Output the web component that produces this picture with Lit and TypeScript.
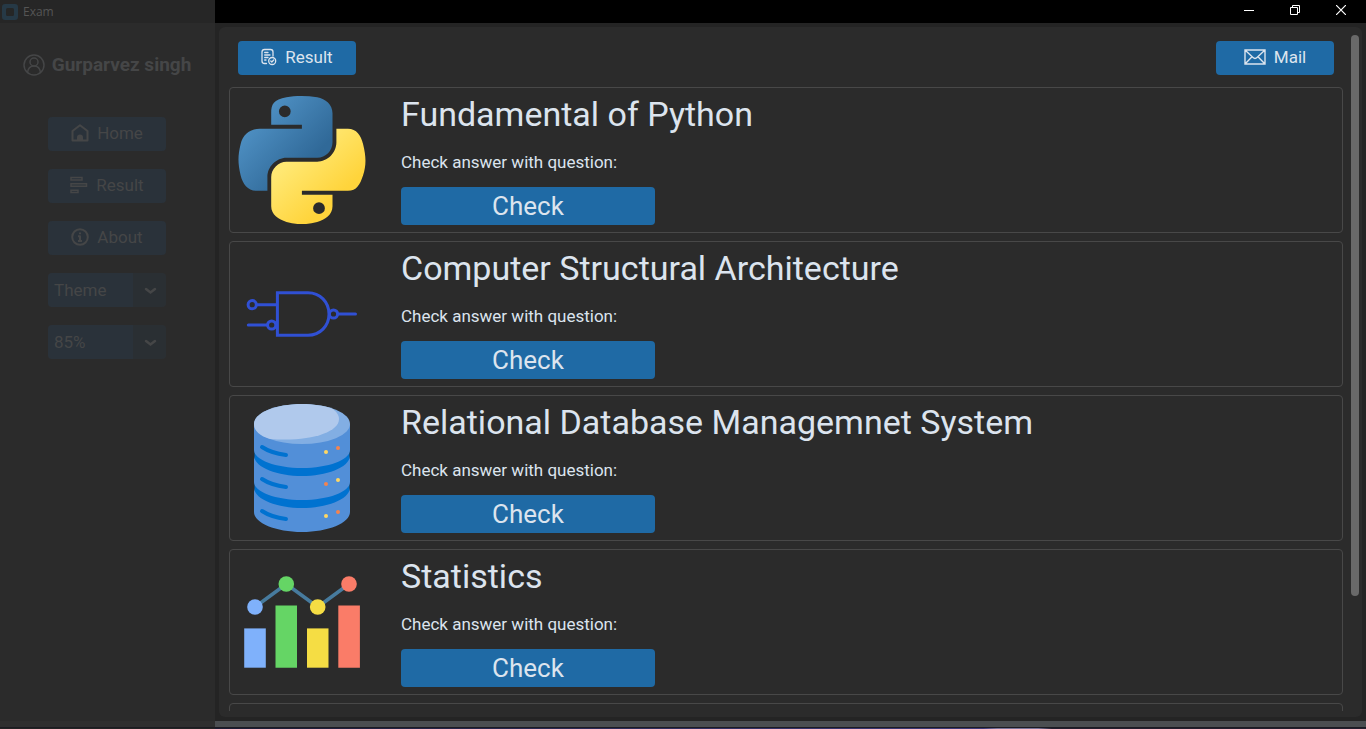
import { LitElement, html, css, svg } from "lit";
import { customElement } from "lit/decorators.js";

interface Subject {
  id: string;
  title: string;
  art: unknown;
}

const python = html`<svg viewBox="0 0 128 128" width="128" height="128" aria-hidden="true">
  <defs>
    <linearGradient id="pyBlue" x1="0" y1="0" x2="0.75" y2="0.7">
      <stop offset="0" stop-color="#5a9fd4" /><stop offset="1" stop-color="#306998" />
    </linearGradient>
    <linearGradient id="pyGold" x1="0.25" y1="0.3" x2="0.65" y2="0.75">
      <stop offset="0" stop-color="#ffe873" /><stop offset="1" stop-color="#ffd43b" />
    </linearGradient>
  </defs>
  <path fill="url(#pyBlue)" fill-rule="evenodd" d="M63.4 0C58 0 53 .5 48.500 1.300 35.500 3.600 33.200 8.400 33.200 17.200V28.800H63.900V32.700H21.700C12.800 32.700 5 38 2.600 48.200-.2 59.800-.3 67 2.600 79.200 4.800 88.300 10 94.800 18.900 94.800H29.400V80.800C29.400 70.700 38.200 61.700 48.500 61.700H79.200C87.700 61.700 94.500 54.700 94.500 46.200V17.200C94.500 8.900 87.500 2.700 79.200 1.300 74 .4 68.700 0 63.400 0ZM46.800 9.400a5.900 5.900 0 1 1 0 11.800a5.900 5.900 0 1 1 0-11.800Z" />
  <path fill="url(#pyGold)" fill-rule="evenodd" d="M98.400 32.700V46.300C98.400 56.800 89.500 65.700 79.200 65.700H48.500C40.200 65.700 33.200 72.900 33.200 81.200V110.300C33.200 118.600 40.400 123.500 48.500 125.900 58.300 128.700 67.600 129.200 79.200 125.900 86.900 123.600 94.500 119.100 94.500 110.300V98.700H63.900V94.800H109.800C118.700 94.800 122 88.600 125.100 79.200 128.300 69.600 128.200 60.300 125.100 48.200 122.900 39.300 118.700 32.700 109.800 32.700ZM81 106.300a5.900 5.900 0 1 1 0 11.800a5.900 5.900 0 1 1 0-11.800Z" />
</svg>`;

const gate = html`<svg viewBox="0 0 128 128" width="128" height="128" aria-hidden="true">
  <g fill="none" stroke="#3050d4" stroke-width="3" stroke-linecap="round">
    <path stroke-linecap="butt" d="M39.400 42.700H70C82 42.700 91 52 91 64S82 85.200 70 85.200H39.400Z" />
    <circle cx="14.200" cy="54.700" r="4.100" /><path d="M19 54.700H38" />
    <circle cx="33.700" cy="75" r="4.100" /><path d="M10.300 75H29" />
    <circle cx="95.500" cy="64" r="4.100" /><path d="M100.500 64H117.500" />
  </g>
</svg>`;

const database = html`<svg viewBox="0 0 128 128" width="128" height="128" aria-hidden="true">
  <path fill="#0072d0" d="M16.500 20H111.500V108H16.500Z" />
  <g fill="#528fd8">
    <path d="M16 20H112V46C112 56 90 64 64 64S16 56 16 46Z" />
    <path d="M16 52C17 64 40 72 64 72S111 64 112 52V78C112 88 90 96 64 96S16 88 16 78Z" />
    <path d="M16 84C17 96 40 104 64 104S111 96 112 84V108C112 119 90 128 64 128S16 119 16 108Z" />
  </g>
  <ellipse cx="64" cy="20" rx="48" ry="20" fill="#82aee3" />
  <path fill="#b0c9ec" d="M64 0C37 0 16 9 16 20C16 27 22 32 32 35C70 38 101 29 101 15C101 11 98 7 94 4.500C86 1.500 75 0 64 0Z" />
  <g fill="none" stroke="#0072d0" stroke-width="4" stroke-linecap="round">
    <path d="M24 43Q33 49 48 51" /><path d="M24 75Q33 81 48 83" /><path d="M24 107Q33 113 48 115" />
  </g>
  <g fill="#ffd764"><circle cx="88" cy="48" r="2" /><circle cx="100" cy="76" r="2" /><circle cx="88" cy="112" r="2" /></g>
  <g fill="#f5834e"><circle cx="100" cy="44" r="2" /><circle cx="88" cy="80" r="2" /><circle cx="100" cy="108" r="2" /></g>
</svg>`;

const chart = html`<svg viewBox="0 0 128 128" width="128" height="128" aria-hidden="true">
  <path d="M17 49L48.300 26L79.700 49L111 26" fill="none" stroke="#477b9e" stroke-width="3.600" />
  <path fill="#7fb1fb" d="M6.200 70.400H27.800V109.700H6.200Z" /><path fill="#65d565" d="M37.500 47.500H59V109.700H37.500Z" />
  <path fill="#f5dd44" d="M69 70.400H90.500V109.700H69Z" /><path fill="#fa7c68" d="M100.300 47.500H121.900V109.700H100.300Z" />
  <circle cx="17" cy="49" r="7.800" fill="#7fb1fb" /><circle cx="48.300" cy="26" r="7.800" fill="#65d565" />
  <circle cx="79.700" cy="49" r="7.800" fill="#f5dd44" /><circle cx="111" cy="26" r="7.800" fill="#fa7c68" />
</svg>`;

const stroked = (size: number, body: unknown, width = 1.5) => html`<svg width=${size} height=${size}
  viewBox="0 0 ${size} ${size}" fill="none" stroke="currentColor" stroke-width=${width}
  stroke-linejoin="round" stroke-linecap="round" aria-hidden="true">${body}</svg>`;

const icons = {
  user: stroked(22, svg`<circle cx="11" cy="11" r="10" /><circle cx="11" cy="8" r="4" /><path d="M4.500 18.500C5 14.500 7.500 12 11 12S17 14.500 17.500 18.500" />`),
  home: stroked(18, svg`<path stroke-width="2" d="M1.500 7L9 1.200L16.500 7V16.500H1.500Z" /><path fill="currentColor" stroke="none" d="M6 17V13.500A3 3 0 0 1 12 13.500V17Z" />`),
  bars: stroked(18, svg`<path stroke-linejoin="miter" d="M1 1.500H12V4H1ZM1 7.800H16.500V10.200H1ZM1 14.200H8V16.500H1Z" />`),
  info: stroked(18, svg`<circle cx="9" cy="9" r="7.800" stroke-width="2" /><path stroke-linecap="butt" stroke-width="2" d="M9 4.500V6.300M7 8.200H9V12.700M7 13H11" />`),
  report: html`<svg width="16" height="18" viewBox="1.500 0 16 18" fill="none" stroke="currentColor" stroke-width="1.300" stroke-linejoin="round" stroke-linecap="round" aria-hidden="true"><path d="M7 15.500H5C3.300 15.500 2.500 14.500 2.500 13V4C2.500 2.200 3.500 1.500 5 1.500H11C12.700 1.500 13.500 2.500 13.500 4V8M5.200 4.500H8.500M5.200 7H10.500M5.200 9.500H8.500M5.200 12H6.500" /><circle cx="12.700" cy="13" r="3.500" /><path d="M11.300 13L12.300 14L14.200 12" /></svg>`,
  mail: html`<svg width="22" height="16" viewBox="0 0 22 16" fill="none" stroke="currentColor" stroke-width="1.400" aria-hidden="true"><path d="M1 1H21V15H1ZM1 1L9 8.500Q11 10.300 13 8.500L21 1M1 15L8 7.800M21 15L14 7.800" /></svg>`,
};

const subjects: Subject[] = [
  { id: "python", title: "Fundamental of Python", art: python },
  { id: "csa", title: "Computer Structural Architecture", art: gate },
  { id: "rdbms", title: "Relational Database Managemnet System", art: database },
  { id: "stats", title: "Statistics", art: chart },
];

@customElement("app-root")
export class AppRoot extends LitElement {
  static styles = css`
    :host {
      display: flex;
      flex-direction: column;
      height: 100vh;
      overflow: hidden;
      background: #242424;
      color: #dce4ee;
      font: 17px/20px Roboto, "Liberation Sans", sans-serif;
    }
    * { box-sizing: border-box; }
    svg { display: block; flex: none; }
    button, select {
      font: inherit;
      color: inherit;
      border: 0;
      margin: 0;
      padding: 0;
    }
    h1, h2, p { margin: 0; font-weight: 400; }
    .titlebar {
      display: flex;
      flex: none;
      height: 23px;
      justify-content: space-between;
      background: #000;
      color: #fff;
    }
    .app {
      display: flex;
      align-items: center;
      gap: 5px;
      width: 215px;
      padding-left: 2px;
      background: #262626;
      color: #555;
      font: 12px/16px "Open Sans", sans-serif;
    }
    .controls { display: flex; padding-right: 2px; }
    .control {
      display: grid;
      place-items: center;
      width: 46px;
      height: 20px;
      background: none;
    }
    .body { display: flex; flex: 1; min-height: 0; }
    .sidebar {
      display: flex;
      flex-direction: column;
      align-items: center;
      width: 215px;
      padding-right: 1px;
      flex: none;
      background: #2b2b2b;
      color: #454647;
    }
    .user {
      display: flex;
      align-items: center;
      gap: 7px;
      height: 50px;
      margin: 17px 0 27px;
      font-size: 19px;
      font-weight: 700;
    }
    .user h1 { font: inherit; }
    .menu {
      display: flex;
      flex-direction: column;
      gap: 18px;
    }
    .item, .action {
      display: flex;
      align-items: center;
      justify-content: center;
      gap: 8px;
      width: 118px;
      height: 34px;
      padding-bottom: 2px;
      border-radius: 4px;
    }
    .item { background: #2a323a; }
    .picker { position: relative; display: block; width: 118px; height: 34px; }
    .select {
      appearance: none;
      width: 100%;
      height: 100%;
      padding: 0 6px;
      border-radius: 4px;
      background: linear-gradient(90deg, #2a323a 85px, #2a2f33 85px);
    }
    .chevron { position: absolute; right: 9px; top: 14px; pointer-events: none; }
    .main {
      display: flex;
      flex: 1;
      min-width: 0;
      margin: 4px;
      border-radius: 6px;
      padding: 8px 3px 6px 10px;
      background: #2b2b2b;
      gap: 8px;
    }
    .scroll { flex: 1; min-width: 0; overflow: hidden; }
    .toolbar {
      display: flex;
      justify-content: space-between;
      padding: 6px 9px 12px;
    }
    .action { background: #1f6aa5; }
    .cards { display: flex; flex-direction: column; gap: 8px; }
    .card {
      display: flex;
      gap: 35px;
      height: 146px;
      padding: 8px;
      border: 1px solid #484848;
      border-radius: 4px;
    }
    .info { display: flex; flex-direction: column; align-items: flex-start; }
    .title { font-size: 34px; line-height: 36px; }
    .hint { margin: 20px 0 15px; }
    .check {
      flex: none;
      width: 254px;
      height: 38px;
      border-radius: 4px;
      background: #1f6aa5;
      font-size: 26px;
    }
    .track { width: 8px; flex: none; }
    .thumb { height: 83%; border-radius: 4px; background: #696969; }
    .footer {
      display: flex;
      flex-direction: column;
      flex: none;
      height: 8px;
      background: #1c1c22;
    }
    .edge {
      height: 6px;
      background: linear-gradient(90deg, #2f2f2f 215px, #4b4e51 215px);
    }
    .glow {
      height: 1px;
      margin-top: 1px;
      background: linear-gradient(90deg, #242424 215px, #1c1c34 215px, #3d3a7c 72%, #77739a 73%, #77739a 76%, #241f30 77%);
    }
  `;

  private picker(label: string, options: string[]) {
    return html`<label class="picker">
      <select class="select" aria-label=${label}>${options.map((o) => html`<option>${o}</option>`)}</select>
      <svg class="chevron" width="13" height="8" viewBox="0 0 13 8" fill="none" stroke="currentColor"
        stroke-width="2.500" stroke-linecap="round" aria-hidden="true"><path d="M2 2L6.500 5.500L11 2" /></svg>
    </label>`;
  }

  private card(s: Subject) {
    return html`<article class="card">
      ${s.art}
      <div class="info">
        <h2 class="title">${s.title}</h2>
        <p class="hint" id=${s.id}>Check answer with question:</p>
        <button class="check" aria-describedby=${s.id}>Check</button>
      </div>
    </article>`;
  }

  render() {
    return html`
      <header class="titlebar">
        <div class="app">
          <svg width="16" height="16" viewBox="0 0 16 16" aria-hidden="true">
            <rect width="16" height="16" rx="3" fill="#263946" /><rect x="4" y="4" width="8" height="8" rx="1.500" fill="#252626" />
          </svg>
          <span>Exam</span>
        </div>
        <div class="controls">
          <button class="control" aria-label="Minimize"><svg width="10" height="10" stroke="#fff"><path d="M0 5.500H10" /></svg></button>
          <button class="control" aria-label="Restore"><svg width="10" height="10" fill="none" stroke="#fff"><path d="M.5 2.500H7.500V9.500H.5ZM2.500 2.500V.5H9.500V7.500H7.500" /></svg></button>
          <button class="control" aria-label="Close"><svg width="10" height="10" stroke="#fff" stroke-width="1.200"><path d="M0 0L10 10M10 0L0 10" /></svg></button>
        </div>
      </header>
      <div class="body">
        <aside class="sidebar">
          <div class="user">${icons.user}<h1>Gurparvez singh</h1></div>
          <nav class="menu">
            <button class="item">${icons.home}Home</button>
            <button class="item">${icons.bars}Result</button>
            <button class="item">${icons.info}About</button>
            ${this.picker("Theme", ["Theme", "Dark", "Light"])}
            ${this.picker("Scaling", ["85%", "100%", "120%"])}
          </nav>
        </aside>
        <main class="main">
          <div class="scroll">
            <div class="toolbar">
              <button class="action">${icons.report}Result</button>
              <button class="action">${icons.mail}Mail</button>
            </div>
            <div class="cards">
              ${subjects.map((s) => this.card(s))}
              <article class="card"></article>
            </div>
          </div>
          <div class="track"><div class="thumb"></div></div>
        </main>
      </div>
      <footer class="footer"><div class="edge"></div><div class="glow"></div></footer>
    `;
  }
}
